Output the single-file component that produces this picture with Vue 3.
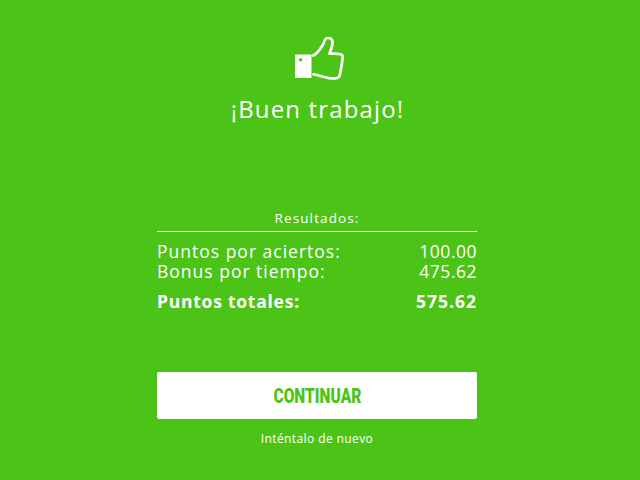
<template>
  <main class="results">
    <svg class="results__icon" width="50" height="44" viewBox="0 0 50 44" aria-hidden="true">
      <path fill="#fff" fill-rule="evenodd" d="M0 17.5h16.5v23.5H0zM5.7 20.9a1.8 1.8 0 1 0 0 3.6a1.8 1.8 0 0 0 0-3.6z" />
      <path
        fill="none"
        stroke="#fff"
        stroke-width="2.7"
        stroke-linejoin="round"
        stroke-linecap="round"
        d="M18 18.5c4-1 7-6 10-11c1.500-2.500 1.500-5 3-6c2-1.500 6-.5 6.500 3c.5 4-1.500 8-3 12c3 .3 8 0 11 .8c2.500 .7 2.500 3 2 5c-.7 5-1.500 10-2.500 15c-.5 2.500-2 4-4.500 4c-3 .3-7 0-10-1c-4-1-8-2.500-12-3"
      />
    </svg>
    <h1 class="results__title">¡Buen trabajo!</h1>

    <section class="summary">
      <h2 class="summary__heading">Resultados:</h2>
      <div class="summary__row" v-for="row in rows" :key="row.label">
        <span>{{ row.label }}</span>
        <span class="summary__value">{{ row.value }}</span>
      </div>
      <div class="summary__row summary__row--total">
        <span>Puntos totales:</span>
        <span class="summary__value">575.62</span>
      </div>
    </section>

    <button class="results__button" type="button"><span>CONTINUAR</span></button>
    <a class="results__retry">Inténtalo de nuevo</a>
  </main>
</template>

<script setup>
const rows = [
  { label: 'Puntos por aciertos:', value: '100.00' },
  { label: 'Bonus por tiempo:', value: '475.62' },
]
</script>

<style>
html,
body {
  margin: 0;
  background: #4cc417;
}
</style>

<style scoped>
.results {
  width: 640px;
  height: 480px;
  box-sizing: border-box;
  padding: 37px 6px 0 0;
  display: flex;
  flex-direction: column;
  align-items: center;
  overflow: hidden;
  background: #4cc417;
  color: #fff;
  font-family: "Open Sans", Lato, sans-serif;
}

.results__icon {
  display: block;
  margin-left: 6px;
}

.results__title {
  margin: 12px 0 0 1px;
  font-size: 24px;
  line-height: 32px;
  font-weight: 400;
  letter-spacing: 1.15px;
}

.summary {
  width: 320px;
  margin-top: 83px;
}

.summary__heading {
  margin: 0 0 9px;
  padding-bottom: 3px;
  border-bottom: 1px solid #fff;
  font-size: 13.5px;
  line-height: 20px;
  font-weight: 400;
  letter-spacing: 1.1px;
  text-align: center;
}

.summary__row {
  display: flex;
  justify-content: space-between;
  font-size: 17.5px;
  line-height: 20px;
  letter-spacing: 1px;
}

.summary__value {
  letter-spacing: 0.5px;
}

.summary__row--total {
  margin-top: 10px;
  font-weight: 700;
  letter-spacing: 0.75px;
}

.summary__row--total .summary__value {
  letter-spacing: 1px;
}

.results__button {
  width: 320px;
  height: 47px;
  margin-top: 61px;
  padding: 0;
  border: 0;
  border-radius: 2px;
  background: #fff;
  color: #4cc417;
  font-family: Roboto, "Liberation Sans", sans-serif;
  font-size: 21px;
  font-weight: 900;
}

.results__button span {
  display: inline-block;
  transform: scaleX(0.74);
}

.results__retry {
  margin-top: 11px;
  font-size: 12px;
  line-height: 18px;
  letter-spacing: 0.4px;
}
</style>
